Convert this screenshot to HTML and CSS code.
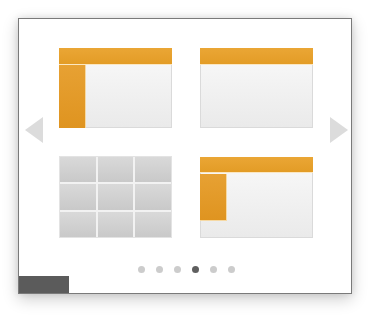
FILE: index.html
```html
<!DOCTYPE html>
<html>
<head>
<meta charset="utf-8">
<link rel="stylesheet" href="styles.css">
</head>
<body>
<div class="frame">
  <div class="stage">
    <div class="arrow arrow-left"></div>
    <div class="grid">
      <div class="card">
        <div class="bar"></div>
        <div class="side side-full"></div>
      </div>
      <div class="card">
        <div class="bar"></div>
      </div>
      <div class="card card-table">
        <div class="cell"></div><div class="cell"></div><div class="cell"></div>
        <div class="cell"></div><div class="cell"></div><div class="cell"></div>
        <div class="cell"></div><div class="cell"></div><div class="cell"></div>
      </div>
      <div class="card card-late">
        <div class="bar bar-thin"></div>
        <div class="side side-short"></div>
      </div>
    </div>
    <div class="arrow arrow-right"></div>
  </div>
  <div class="dots">
    <span class="dot"></span>
    <span class="dot"></span>
    <span class="dot"></span>
    <span class="dot dot-active"></span>
    <span class="dot"></span>
    <span class="dot"></span>
  </div>
  <div class="footer-block"></div>
</div>
</body>
</html>
```

FILE: styles.css
```css
html, body {
  margin: 0;
  padding: 0;
  background: #ffffff;
}
body {
  width: 378px;
  height: 321px;
  overflow: hidden;
}
.frame {
  margin: 18px 0 0 18px;
  width: 334px;
  height: 276px;
  box-sizing: border-box;
  border: 1px solid #7a7a7a;
  background: #ffffff;
  box-shadow: 0 5px 15px rgba(0, 0, 0, 0.2), 0 0 7px rgba(0, 0, 0, 0.1);
  display: flex;
  flex-direction: column;
}
.stage {
  display: flex;
  padding-top: 29px;
  padding-left: 6px;
}
.arrow {
  width: 0;
  height: 0;
  margin-top: 69px;
  border-top: 13px solid transparent;
  border-bottom: 13px solid transparent;
}
.arrow-left {
  border-right: 18px solid #dcdcdc;
  margin-right: 16px;
}
.arrow-right {
  border-left: 18px solid #dcdcdc;
  margin-left: 17px;
}
.grid {
  display: grid;
  grid-template-columns: 113px 113px;
  grid-template-rows: 80px 82px;
  column-gap: 28px;
  row-gap: 28px;
}
.card {
  box-sizing: border-box;
  border: 1px solid #dadada;
  background: linear-gradient(#f9f9f9, #eaeaea);
  display: flex;
  flex-direction: column;
}
.card-late {
  margin-top: 1px;
}
.bar {
  height: 16px;
  margin: -1px -1px 0 -1px;
  background: linear-gradient(#eaa635, #e39c26);
  border-bottom: 1px solid #fbe7c2;
}
.bar-thin {
  height: 15px;
}
.side {
  width: 26px;
  margin-left: -1px;
  background: linear-gradient(#e7a133, #df9420);
  border-right: 1px solid #f6d9a4;
}
.side-full {
  flex: 1;
  margin-bottom: -1px;
}
.side-short {
  height: 46px;
  margin-top: 1px;
  border-bottom: 1px solid #f6d9a4;
}
.card-table {
  display: grid;
  grid-template-columns: 1fr 1fr 1fr;
  grid-template-rows: 1fr 1fr 1fr;
  gap: 2px;
  background: #f2f2f2;
  border-color: #e3e3e3;
}
.cell {
  background: linear-gradient(#d9d9d9, #c9c9c9);
}
.dots {
  display: flex;
  gap: 11px;
  margin-top: 28px;
  padding-left: 119px;
  height: 7px;
}
.dot {
  width: 7px;
  height: 7px;
  border-radius: 50%;
  background: #cccccc;
}
.dot-active {
  background: #5f5f5f;
}
.footer-block {
  margin-top: auto;
  width: 50px;
  height: 17px;
  background: #5b5b5b;
}
```
